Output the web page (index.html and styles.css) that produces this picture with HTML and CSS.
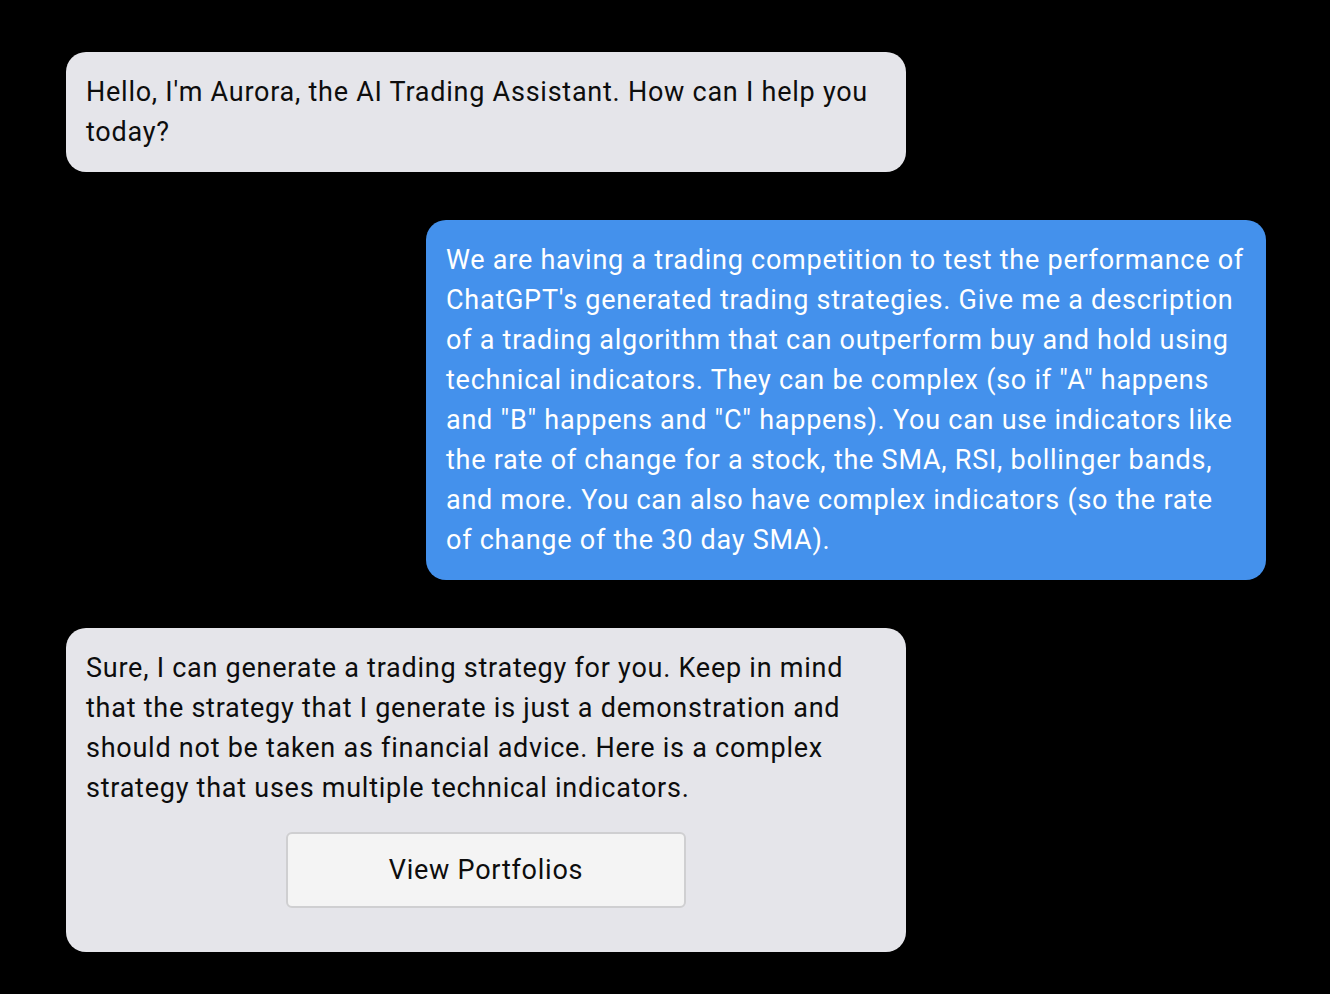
FILE: index.html
```html
<!DOCTYPE html>
<html lang="en">
<head>
<meta charset="utf-8">
<title>Aurora Chat</title>
<link rel="stylesheet" href="styles.css">
</head>
<body>
<main class="chat">
  <div class="msg bot">Hello, I'm Aurora, the AI Trading Assistant. How can I help you today?</div>
  <div class="msg user">We are having a trading competition to test the performance of ChatGPT's generated trading strategies. Give me a description of a trading algorithm that can outperform buy and hold using technical indicators. They can be complex (so if "A" happens and "B" happens and "C" happens). You can use indicators like the rate of change for a stock, the SMA, RSI, bollinger bands, and more. You can also have complex indicators (so the rate of change of the 30 day SMA).</div>
  <div class="msg bot">
    <p class="text">Sure, I can generate a trading strategy for you. Keep in mind that the strategy that I generate is just a demonstration and should not be taken as financial advice. Here is a complex strategy that uses multiple technical indicators.</p>
    <div class="actions"><button class="btn">View Portfolios</button></div>
  </div>
</main>
</body>
</html>
```
FILE: styles.css
```css
html, body {
  margin: 0;
  padding: 0;
  background: #000;
}
body {
  font-family: Roboto, "Liberation Sans", sans-serif;
  font-size: 27px;
  line-height: 40px;
  letter-spacing: 0.75px;
}
.chat {
  display: flex;
  flex-direction: column;
  gap: 48px;
  padding: 52px 64px 40px 66px;
}
.msg {
  box-sizing: border-box;
  width: 840px;
  padding: 20px;
  border-radius: 20px;
}
.bot {
  align-self: flex-start;
  background: #e5e5ea;
  color: #0d0d0d;
}
.user {
  align-self: flex-end;
  background: #4491ec;
  color: #fff;
}
.text {
  margin: 0;
}
.actions {
  display: flex;
  justify-content: center;
  margin-top: 24px;
  margin-bottom: 24px;
}
.btn {
  box-sizing: border-box;
  width: 400px;
  height: 76px;
  background: #f4f4f4;
  border: 2px solid #cfcfd1;
  border-radius: 6px;
  font-family: inherit;
  font-size: 27px;
  letter-spacing: 0.75px;
  color: #0d0d0d;
}
```
